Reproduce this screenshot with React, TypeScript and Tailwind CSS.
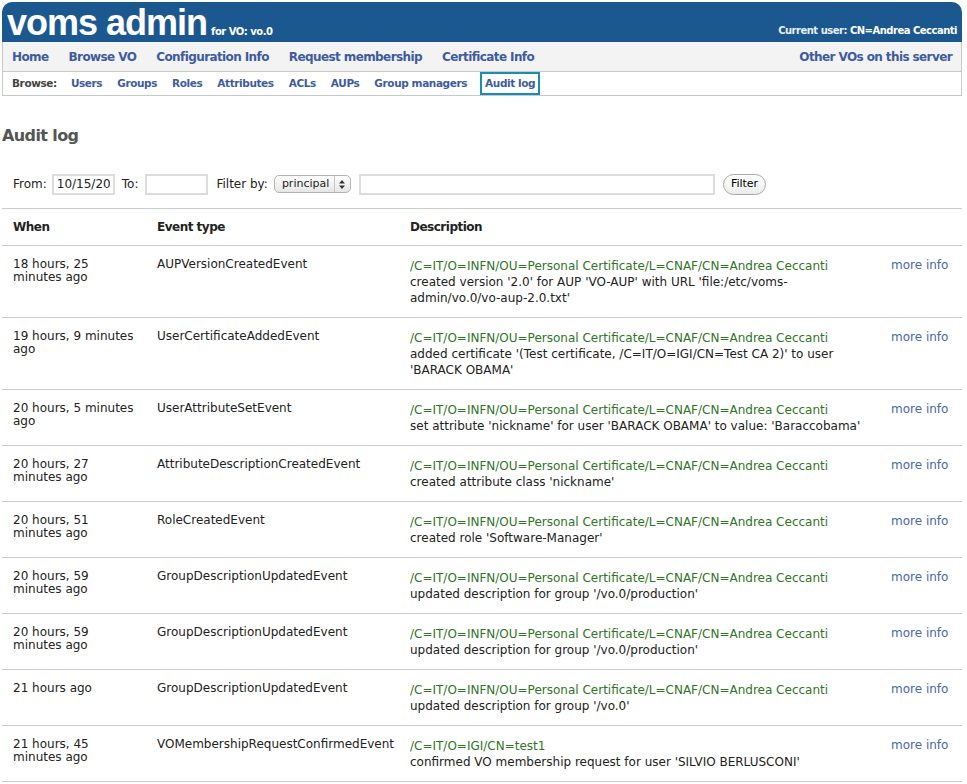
import React from 'react';

type AuditEvent = {
  when: string;
  type: string;
  principal: string;
  description: string;
};

const events: AuditEvent[] = [
  {
    when: '18 hours, 25 minutes ago',
    type: 'AUPVersionCreatedEvent',
    principal: '/C=IT/O=INFN/OU=Personal Certificate/L=CNAF/CN=Andrea Ceccanti',
    description: "created version '2.0' for AUP 'VO-AUP' with URL 'file:/etc/voms-admin/vo.0/vo-aup-2.0.txt'",
  },
  {
    when: '19 hours, 9 minutes ago',
    type: 'UserCertificateAddedEvent',
    principal: '/C=IT/O=INFN/OU=Personal Certificate/L=CNAF/CN=Andrea Ceccanti',
    description: "added certificate '(Test certificate, /C=IT/O=IGI/CN=Test CA 2)' to user 'BARACK OBAMA'",
  },
  {
    when: '20 hours, 5 minutes ago',
    type: 'UserAttributeSetEvent',
    principal: '/C=IT/O=INFN/OU=Personal Certificate/L=CNAF/CN=Andrea Ceccanti',
    description: "set attribute 'nickname' for user 'BARACK OBAMA' to value: 'Baraccobama'",
  },
  {
    when: '20 hours, 27 minutes ago',
    type: 'AttributeDescriptionCreatedEvent',
    principal: '/C=IT/O=INFN/OU=Personal Certificate/L=CNAF/CN=Andrea Ceccanti',
    description: "created attribute class 'nickname'",
  },
  {
    when: '20 hours, 51 minutes ago',
    type: 'RoleCreatedEvent',
    principal: '/C=IT/O=INFN/OU=Personal Certificate/L=CNAF/CN=Andrea Ceccanti',
    description: "created role 'Software-Manager'",
  },
  {
    when: '20 hours, 59 minutes ago',
    type: 'GroupDescriptionUpdatedEvent',
    principal: '/C=IT/O=INFN/OU=Personal Certificate/L=CNAF/CN=Andrea Ceccanti',
    description: "updated description for group '/vo.0/production'",
  },
  {
    when: '20 hours, 59 minutes ago',
    type: 'GroupDescriptionUpdatedEvent',
    principal: '/C=IT/O=INFN/OU=Personal Certificate/L=CNAF/CN=Andrea Ceccanti',
    description: "updated description for group '/vo.0/production'",
  },
  {
    when: '21 hours ago',
    type: 'GroupDescriptionUpdatedEvent',
    principal: '/C=IT/O=INFN/OU=Personal Certificate/L=CNAF/CN=Andrea Ceccanti',
    description: "updated description for group '/vo.0'",
  },
  {
    when: '21 hours, 45 minutes ago',
    type: 'VOMembershipRequestConfirmedEvent',
    principal: '/C=IT/O=IGI/CN=test1',
    description: "confirmed VO membership request for user 'SILVIO BERLUSCONI'",
  },
];

const mainLinks = ['Home', 'Browse VO', 'Configuration Info', 'Request membership', 'Certificate Info'];
const browseLinks = ['Users', 'Groups', 'Roles', 'Attributes', 'ACLs', 'AUPs', 'Group managers'];

const App: React.FC = () => {
  return (
    <div className="min-h-[784px] bg-white font-['DejaVu_Sans',sans-serif] text-[12px] text-[#222]">
      <div className="ml-[2px] w-[960px] pt-[2px]">
        {/* Title bar */}
        <div className="flex h-[40px] items-end justify-between rounded-t-[10px] bg-[#1c5890] px-[5px] text-white">
          <div className="flex items-baseline gap-[4px]">
            <span className="font-['Liberation_Sans',sans-serif] text-[36px] font-bold leading-[38px] tracking-[-1px]">
              voms admin
            </span>
            <span className="text-[10px] font-bold tracking-[-0.5px]">for VO: vo.0</span>
          </div>
          <div className="pb-[4px] text-[10px] font-bold tracking-[-0.5px]">
            <span className="text-[#e8eef6]">Current user: </span>
            <span>CN=Andrea Ceccanti</span>
          </div>
        </div>

        {/* Main navigation */}
        <div className="flex h-[30px] items-center justify-between border-x border-b border-[#c8c8c8] bg-[#f3f3f3] px-[9px] pt-[1px] text-[12px] font-bold tracking-[-0.6px] text-[#3d5c9f]">
          <div className="flex gap-[20px]">
            {mainLinks.map((l) => (
              <a key={l} href="#">{l}</a>
            ))}
          </div>
          <a href="#">Other VOs on this server</a>
        </div>

        {/* Browse sub-navigation */}
        <div className="flex h-[24px] items-stretch border-x border-b border-[#c8c8c8] px-[9px] text-[10.5px] font-bold tracking-[-0.4px]">
          <span className="flex items-center pt-[1px] text-[#444]">Browse:</span>
          <div className="ml-[14px] flex items-stretch gap-[15px] text-[#3d5c9f]">
            {browseLinks.map((l) => (
              <a key={l} href="#" className="flex items-center pt-[1px]">{l}</a>
            ))}
            <a href="#" className="-ml-[2px] flex items-center border-2 border-[#1a8db5] px-[3px] pt-[1px]">
              Audit log
            </a>
          </div>
        </div>

        <h1 className="mt-[28px] text-[16px] font-bold tracking-[-0.6px] text-[#555]">Audit log</h1>

        {/* Filter form */}
        <form className="mt-[25px] flex h-[22px] items-center pl-[11px] text-[12px] text-[#222]">
          <label htmlFor="from">From:</label>
          <input
            id="from"
            type="text"
            defaultValue="10/15/2011"
            className="ml-[5px] h-[21px] w-[63px] border-2 border-[#dcdcdc] px-[3px] text-[12px] outline-none"
          />
          <label htmlFor="to" className="ml-[7px]">To:</label>
          <input id="to" type="text" className="ml-[7px] h-[21px] w-[63px] border-2 border-[#dcdcdc] outline-none" />
          <span className="ml-[8px]">Filter by:</span>
          <div className="ml-[6px] flex h-[18px] w-[77px] items-center justify-between rounded-[5px] border border-[#b4b4b4] bg-gradient-to-b from-white to-[#e6e6e6] pl-[7px] pr-[5px] text-[11px]">
            <span>principal</span>
            <span className="flex h-full items-center border-l border-[#c8c8c8] pl-[4px]">
              <svg width="6" height="9" viewBox="0 0 6 9">
                <path d="M3 0 L6 3.5 L0 3.5 Z M0 5.5 L6 5.5 L3 9 Z" fill="#333" />
              </svg>
            </span>
          </div>
          <input type="text" className="ml-[8px] h-[21px] w-[356px] border-2 border-[#dcdcdc] outline-none" />
          <button
            type="button"
            className="ml-[8px] h-[21px] rounded-full border border-[#a8a8a8] bg-gradient-to-b from-white to-[#ececec] px-[7px] text-[11px] text-black"
          >
            Filter
          </button>
        </form>

        {/* Audit table */}
        <div className="mt-[13px] border-t border-[#cccccc]">
          <div className="grid grid-cols-[155px_253px_481px_1fr] items-center py-[10px] text-[12px] font-bold leading-[16px] tracking-[-0.5px] text-[#222]">
            <div className="pl-[11px]">When</div>
            <div>Event type</div>
            <div>Description</div>
            <div />
          </div>
          {events.map((e, i) => (
            <div
              key={i}
              className="grid grid-cols-[155px_253px_481px_1fr] border-t border-[#cccccc] pt-[12px] pb-[11px]"
            >
              <div className="pl-[11px] pr-[20px] leading-[13px]">{e.when}</div>
              <div className="leading-[13px]">{e.type}</div>
              <div className="pr-[26px] leading-[16px]">
                <div className="text-[#2e7526]">{e.principal}</div>
                <div>{e.description}</div>
              </div>
              <div className="leading-[14px]">
                <a href="#" className="text-[#4566a8]">more info</a>
              </div>
            </div>
          ))}
          <div className="border-t border-[#cccccc]" />
        </div>
      </div>
    </div>
  );
};

export default App;
